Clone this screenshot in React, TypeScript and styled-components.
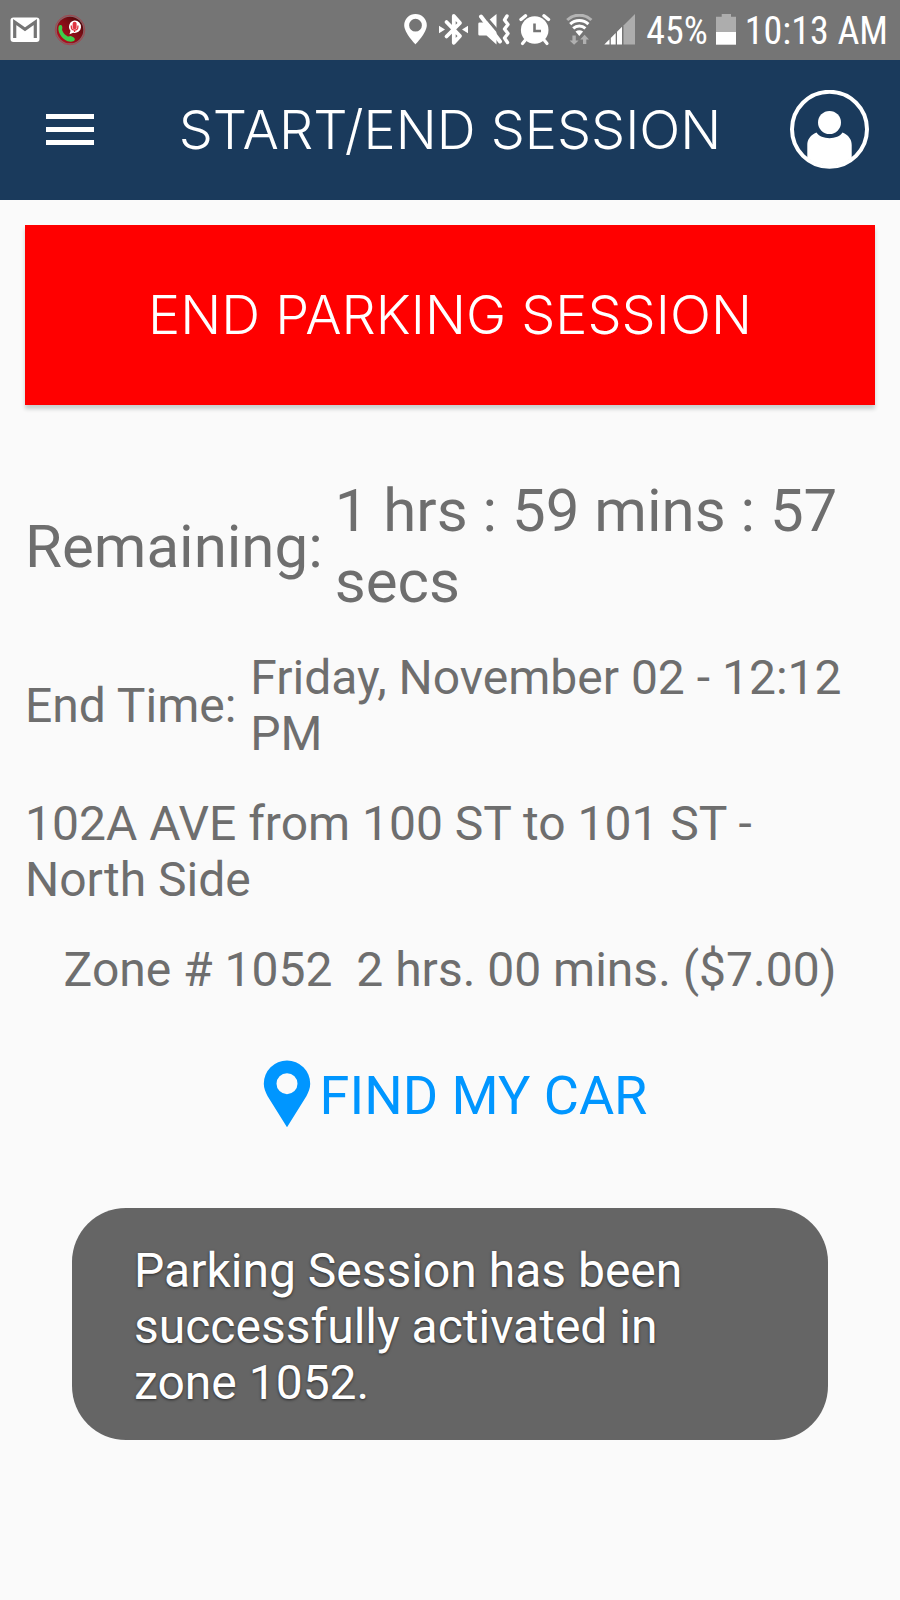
import React from "react";
import styled, { createGlobalStyle } from "styled-components";

const GlobalStyle = createGlobalStyle`
  *, *::before, *::after { box-sizing: border-box; }
  body {
    margin: 0;
    background: #fafafa;
    color: #6e6e6e;
    font-family: Roboto, "Liberation Sans", sans-serif;
  }
  button { font: inherit; border: 0; margin: 0; padding: 0; cursor: pointer; }
  p, h1, dl, dt, dd { margin: 0; font-weight: 400; }
  svg { display: block; flex: none; }
`;

const Page = styled.div`
  min-height: 100vh;
  display: flex;
  flex-direction: column;
`;

const StatusBar = styled.div`
  height: 60px;
  padding: 0 12px 0 10px;
  display: flex;
  align-items: center;
  justify-content: space-between;
  background: #757575;
  color: #fff;
`;

const StatusGroup = styled.div<{ $gap: number }>`
  display: flex;
  align-items: center;
  gap: ${(p) => p.$gap}px;
`;

const StatusText = styled.span`
  padding-top: 2px;
  font-family: "Roboto Condensed", Roboto, sans-serif;
  font-size: 38px;
  line-height: 58px;
  white-space: nowrap;
`;

const Header = styled.header`
  height: 140px;
  padding: 0 30px;
  display: grid;
  grid-template-columns: 80px 1fr 80px;
  align-items: center;
  background: #1a3a5c;
  color: #fff;
`;

const Title = styled.h1`
  font-family: Inter, sans-serif;
  font-size: 54px;
  font-weight: 300;
  line-height: 60px;
  text-align: center;
  white-space: nowrap;
`;

const IconButton = styled.button`
  height: 80px;
  display: flex;
  align-items: center;
  justify-content: center;
  background: none;
  color: inherit;
`;

const Content = styled.main`
  padding: 25px;
  display: flex;
  flex-direction: column;
`;

const EndButton = styled.button`
  height: 180px;
  background: #ff0000;
  color: #fff;
  font-family: Inter, sans-serif;
  font-size: 54px;
  font-weight: 300;
  line-height: 60px;
  box-shadow: 0 4px 4px rgba(0, 40, 30, 0.2);
`;

const Details = styled.dl`
  margin-top: 70px;
  display: flex;
  flex-direction: column;
  gap: 33px;
`;

const DetailRow = styled.div<{ $large?: boolean }>`
  display: flex;
  align-items: center;
  gap: ${(p) => (p.$large ? 12 : 14)}px;
  font-size: ${(p) => (p.$large ? 60 : 48)}px;
  line-height: ${(p) => (p.$large ? 71 : 56)}px;

  dt { white-space: nowrap; }
`;

const BodyText = styled.p<{ $center?: boolean }>`
  margin-top: 34px;
  font-size: 48px;
  line-height: 56px;
  text-align: ${(p) => (p.$center ? "center" : "left")};
  white-space: pre-wrap;
`;

const FindButton = styled.button`
  align-self: center;
  margin-top: 62px;
  padding-left: 10px;
  display: flex;
  align-items: center;
  gap: 9px;
  background: none;
  color: #0096ff;
  font-size: 54px;
  line-height: 72px;
`;

const Toast = styled.div`
  margin: 51px 72px 0;
  padding: 35px 62px 29px;
  border-radius: 54px;
  background: #656565;
  color: #fff;
  font-size: 48px;
  line-height: 56px;
  text-shadow: 0 1px 3px rgba(0, 0, 0, 0.6);
`;

const MailIcon = () => (
  <svg width="30" height="26" viewBox="0 0 30 26" aria-hidden="true">
    <rect x="0.5" y="0.5" width="29" height="24.5" rx="3" fill="#fff" />
    <path d="M4.7 21V5L15 12.2 25.3 5v16" fill="none" stroke="#757575" strokeWidth="3.2" />
  </svg>
);

const CallRecorderIcon = () => (
  <svg width="32" height="32" viewBox="0 0 32 32" aria-hidden="true">
    <defs>
      <linearGradient id="disc" x1="0" y1="1" x2="1" y2="0">
        <stop offset="0" stopColor="#c01022" />
        <stop offset="0.6" stopColor="#7c0c14" />
        <stop offset="1" stopColor="#3c0606" />
      </linearGradient>
    </defs>
    <circle cx="16" cy="16" r="14.8" fill="#85666a" stroke="#a04850" />
    <circle cx="16" cy="16" r="13.3" fill="url(#disc)" />
    <path d="M4.8 12c.8-1.6 2.8-1.4 3.4.4.5 1.8-.4 2.6 0 3.8 1 2.8 3 5 5.600 6.2 1.200.5 2-.9 3.600-.2 2.400 1 4.200 2.400 3.200 4-1.600 2.200-6.600 1.800-10-.8C6.200 22.500 3.200 16.500 4.800 12z" fill="#3dcc4a" />
    <path d="M20.500 6.600a6.200 6.200 0 1 1-1.200 12.200l-3.800 1.400 1-3.400A6.200 6.200 0 0 1 20.500 6.600z" fill="#fff" />
    <rect x="18.6" y="7.8" width="4" height="7.4" rx="2" fill="#e03540" />
    <path d="M17.300 11.500v1.300a3.200 3.200 0 0 0 6.600 0v-1.300M20.600 16v2" fill="none" stroke="#e03540" strokeWidth="1.3" />
  </svg>
);

const LocationIcon = () => (
  <svg width="28" height="32" viewBox="0 0 28 32" aria-hidden="true">
    <path fill="#fff" fillRule="evenodd" d="M13.5 0A11.3 11.3 0 0 0 2.2 11.3C2.2 19 13.5 30.4 13.5 30.4S24.8 19 24.8 11.3A11.3 11.3 0 0 0 13.5 0zm0 4.8a6.4 6.4 0 1 1 0 12.8 6.4 6.4 0 0 1 0-12.8z" />
  </svg>
);

const BluetoothIcon = () => (
  <svg width="32" height="32" viewBox="0 0 32 32" aria-hidden="true">
    <path d="M8.5 8 22 22 15.8 28.8V2L22 9 8.5 22.5" fill="none" stroke="#fff" strokeWidth="3.8" strokeLinejoin="round" strokeLinecap="round" />
    <path d="M1 11.800v7.400l6-3.700zM30 11.800v7.400l-6-3.700z" fill="#fff" />
  </svg>
);

const MuteIcon = () => (
  <svg width="33" height="32" viewBox="0 0 33 32" aria-hidden="true">
    <path d="M1.5 8.5H8L18.5 0V30.5L8.5 21.5H1.5Q.3 21.5 .3 20.3V9.7Q.3 8.5 1.5 8.5z" fill="#fff" />
    <path d="M5 0 26 24.5" stroke="#757575" strokeWidth="3" />
    <path d="M3 2.5 22 27.5" stroke="#fff" strokeWidth="4" strokeLinecap="round" />
    <path d="M29 2 26.5 6l3.5 4.5-3.5 4.5 3.5 4.5-3.5 4.5 3 4.5" fill="none" stroke="#fff" strokeWidth="3.4" strokeLinejoin="round" strokeLinecap="round" />
  </svg>
);

const AlarmIcon = () => (
  <svg width="32" height="32" viewBox="0 0 32 32" aria-hidden="true">
    <circle cx="15.7" cy="16" r="13.8" fill="#fff" />
    <path d="M15.5 9.5V17H22" fill="none" stroke="#757575" strokeWidth="2.6" />
    <path d="M2 5.5 6.5 1.8M25 1.8 29.5 5.5" stroke="#fff" strokeWidth="3.4" strokeLinecap="round" />
    <path d="M6 26.5 3.5 29.5M25.5 26.5 28 29.5" stroke="#fff" strokeWidth="3.2" strokeLinecap="round" />
  </svg>
);

const WifiIcon = () => (
  <svg width="37" height="32" viewBox="0 0 37 32" aria-hidden="true">
    <g fill="none" strokeWidth="3">
      <path d="M8.2 6a17.5 17.5 0 0 1 24.2 0" stroke="#b4b4b4" />
      <path d="M11.2 10.2a13.2 13.2 0 0 1 18.2 0M14.2 14.3a9 9 0 0 1 12.2 0" stroke="#fff" />
    </g>
    <path d="M16.5 17.6q3.8-2.6 7.6 0L20.3 22z" fill="#fff" />
    <path d="M13.4 21.5h3.4v5h2.8l-4.5 4.3-4.5-4.3h2.8zM24 30v-4.5h-2.8l4.4-4.7 4.4 4.7h-2.7V30z" fill="#b0b0b0" />
  </svg>
);

const SignalIcon = () => (
  <svg width="34" height="32" viewBox="0 0 34 32" aria-hidden="true">
    <path d="M.3 30.5 5.500 25.300v5.200zM6.800 24l4.900-4.900v11.400H6.800zM13 17.800l5-5v17.700H13z" fill="#fff" />
    <path d="M19.5 11.5 31 0v30.500H19.5z" fill="#adadad" />
  </svg>
);

const BatteryIcon = () => (
  <svg width="21" height="32" viewBox="0 0 21 32" aria-hidden="true">
    <path d="M5.7 0H15v2.800h5V18H0V2.800h5.700z" fill="#adadad" />
    <path d="M0 18h20v12.700H0z" fill="#fff" />
  </svg>
);

const MenuIcon = () => (
  <svg width="48" height="34" viewBox="0 0 48 34" aria-hidden="true">
    <path d="M0 1h48v5H0zM0 14h48v5H0zM0 27h48v5H0z" fill="currentColor" />
  </svg>
);

const ProfileIcon = () => (
  <svg width="80" height="80" viewBox="0 0 80 80" aria-hidden="true">
    <circle cx="39.5" cy="39.3" r="37.5" fill="none" stroke="#fff" strokeWidth="4" />
    <circle cx="39.5" cy="32.5" r="11.5" fill="#fff" />
    <path d="M26.500 42.500C31 50 48 50 52.500 42.500 58.500 45 61.700 49.500 61.700 55V68A36.500 36.500 0 0 1 17.300 68V55C17.300 49.500 20.500 45 26.500 42.500z" fill="#fff" />
  </svg>
);

const CarPinIcon = () => (
  <svg width="48" height="72" viewBox="0 0 48 72" aria-hidden="true">
    <path fill="currentColor" fillRule="evenodd" d="M24 .5A23.200 23.200 0 0 0 .8 23.700C.8 28 2.500 32 4.500 36L24 67.300 43.500 36C45.500 32 47.200 28 47.200 23.700A23.200 23.200 0 0 0 24 .5zm0 12.700a10.500 10.500 0 1 1 0 21 10.500 10.500 0 0 1 0-21z" />
  </svg>
);

export default function App() {
  return (
    <Page>
      <GlobalStyle />
      <StatusBar>
        <StatusGroup $gap={14}>
          <MailIcon />
          <CallRecorderIcon />
        </StatusGroup>
        <StatusGroup $gap={8}>
          <LocationIcon />
          <BluetoothIcon />
          <MuteIcon />
          <AlarmIcon />
          <WifiIcon />
          <SignalIcon />
          <StatusText>45%</StatusText>
          <BatteryIcon />
          <StatusText>10:13 AM</StatusText>
        </StatusGroup>
      </StatusBar>
      <Header>
        <IconButton type="button" aria-label="Open menu">
          <MenuIcon />
        </IconButton>
        <Title>START/END SESSION</Title>
        <IconButton type="button" aria-label="Profile">
          <ProfileIcon />
        </IconButton>
      </Header>
      <Content>
        <EndButton type="button">END PARKING SESSION</EndButton>
        <Details>
          <DetailRow $large>
            <dt>Remaining:</dt>
            <dd>1 hrs : 59 mins : 57 secs</dd>
          </DetailRow>
          <DetailRow>
            <dt>End Time:</dt>
            <dd>Friday, November 02 - 12:12 PM</dd>
          </DetailRow>
        </Details>
        <BodyText>102A AVE from 100 ST to 101 ST - North Side</BodyText>
        <BodyText $center>{"Zone # 1052  2 hrs. 00 mins. ($7.00)"}</BodyText>
        <FindButton type="button">
          <CarPinIcon />
          FIND MY CAR
        </FindButton>
      </Content>
      <Toast role="status">
        Parking Session has been successfully activated in zone 1052.
      </Toast>
    </Page>
  );
}
